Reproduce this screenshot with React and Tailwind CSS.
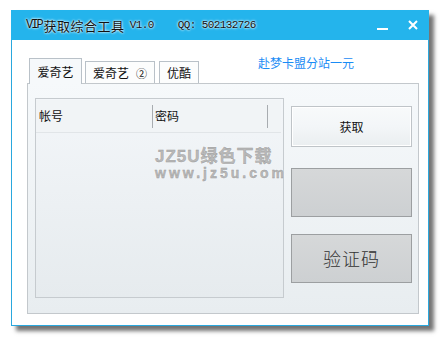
import React from "react";

const cjk = '"Noto Sans CJK SC", "Liberation Sans", sans-serif';

const Tab = ({ children, active, width }) => (
  <div
    className={
      active
        ? "h-[26px] border border-b-0 border-[#b9c1c8] bg-[#f6f9fb] flex items-center justify-center relative z-10"
        : "h-[23px] border border-[#b9c1c8] bg-[#fcfdfd] flex items-center justify-center"
    }
    style={{ width }}
  >
    <span className="text-[12px] leading-none text-[#111] pt-[1px] flex items-center">{children}</span>
  </div>
);

const App = () => {
  return (
    <div
      className="w-[440px] h-[338px] bg-white pl-[11px] pt-[10px]"
      style={{ fontFamily: cjk }}
    >
      <div className="w-[418px] h-[316px] flex flex-col shadow-[5px_5px_4px_rgba(0,0,0,0.55)]">
        {/* title bar */}
        <div className="h-[30px] bg-[#24b4ec] flex items-center pl-[15px] pr-[10px] text-[#111] [text-shadow:0_0_3px_#fff,0_0_2px_#fff]">
          <span className="font-['Liberation_Mono',monospace] text-[12px] tracking-[-2px]">VIP</span>
          <span className="text-[13px] tracking-[0.5px] leading-none ml-[2px]">获取综合工具</span>
          <span className="font-['Liberation_Mono',monospace] text-[11px] tracking-[-0.6px] ml-[5px]">V1.0</span>
          <span className="font-['Liberation_Mono',monospace] text-[11px] tracking-[-0.6px] ml-[24px]">QQ: 502132726</span>
          <div className="ml-auto flex items-center gap-[20px]">
            <div className="w-[11px] h-[2px] bg-white mt-[8px]" />
            <svg width="10" height="10" viewBox="0 0 10 10" className="mr-[1px]">
              <path d="M1 1 L9 9 M9 1 L1 9" stroke="#fff" strokeWidth="2" />
            </svg>
          </div>
        </div>

        {/* body */}
        <div className="flex-1 bg-white border border-t-0 border-[#2aa8de] pl-[15px] pr-[9px] pt-[18px] pb-[11px] flex flex-col">
          <div className="flex items-end -mb-px ml-[2px]">
            <Tab active width={53}>爱奇艺</Tab>
            <div className="w-[3px]" />
            <Tab width={70}>
              爱奇艺<span className="ml-[7px] text-[11px]">②</span>
            </Tab>
            <div className="w-[4px]" />
            <Tab width={40}>优酷</Tab>
            <span className="self-start ml-[59px] -mt-[3px] text-[12px] leading-[16px] text-[#1a8cf5]">
              赴梦卡盟分站一元
            </span>
          </div>

          <div className="relative flex-1 border border-[#c3c8cc] bg-gradient-to-b from-[#f6f9fb] to-[#e8edf0] pl-[7px] pt-[14px] flex items-start">
            {/* list */}
            <div className="w-[249px] h-[200px] border border-[#c6cbcf] bg-gradient-to-b from-[#f3f6f9] to-[#e6ebee] flex flex-col">
              <div className="h-[33px] mr-[2px] mt-[1px] bg-[#f1f4f6] border-b border-[#e1e5e8] flex items-center text-[12px] text-[#111]">
                <span className="w-[116px] pl-[3px]">帐号</span>
                <div className="w-px h-[23px] bg-[#a8acb0]" />
                <span className="w-[114px] pl-[2px]">密码</span>
                <div className="w-px h-[23px] bg-[#a8acb0]" />
              </div>
            </div>

            {/* buttons */}
            <div className="ml-[7px] mt-[8px] flex flex-col">
              <button className="w-[121px] h-[41px] border border-[#bfc4c8] bg-gradient-to-b from-[#f8fafb] via-[#f3f6f8] to-[#eaeef0] shadow-[inset_0_0_0_1px_#fff] text-[12px] text-[#111] flex items-center justify-center">
                获取
              </button>
              <button className="mt-[21px] w-[121px] h-[49px] border border-[#9c9fa1] bg-gradient-to-b from-[#d6d8d9] to-[#cdd0d2]" />
              <button className="mt-[17px] w-[121px] h-[49px] border border-[#9c9fa1] bg-gradient-to-b from-[#d6d8d9] to-[#cdd0d2] text-[18px] text-[#333] font-light tracking-[1px] flex items-center justify-center">
                验证码
              </button>
            </div>

            {/* watermark */}
            <div className="absolute left-[127px] top-[64px] flex flex-col text-[#b9b9b9] font-bold [-webkit-text-stroke:0.4px_#9a9a9a] [text-shadow:0_0_2px_#fff] select-none">
              <span className="block h-[18px] text-[17px] leading-[18px] tracking-[1px] font-['Liberation_Sans','Noto_Sans_CJK_SC',sans-serif]">JZ5U绿色下载</span>
              <span className="block h-[14px] text-[14px] leading-[14px] tracking-[3px] font-['Liberation_Sans',sans-serif]">www.jz5u.com</span>
            </div>
          </div>
        </div>
      </div>
    </div>
  );
};

export default App;
